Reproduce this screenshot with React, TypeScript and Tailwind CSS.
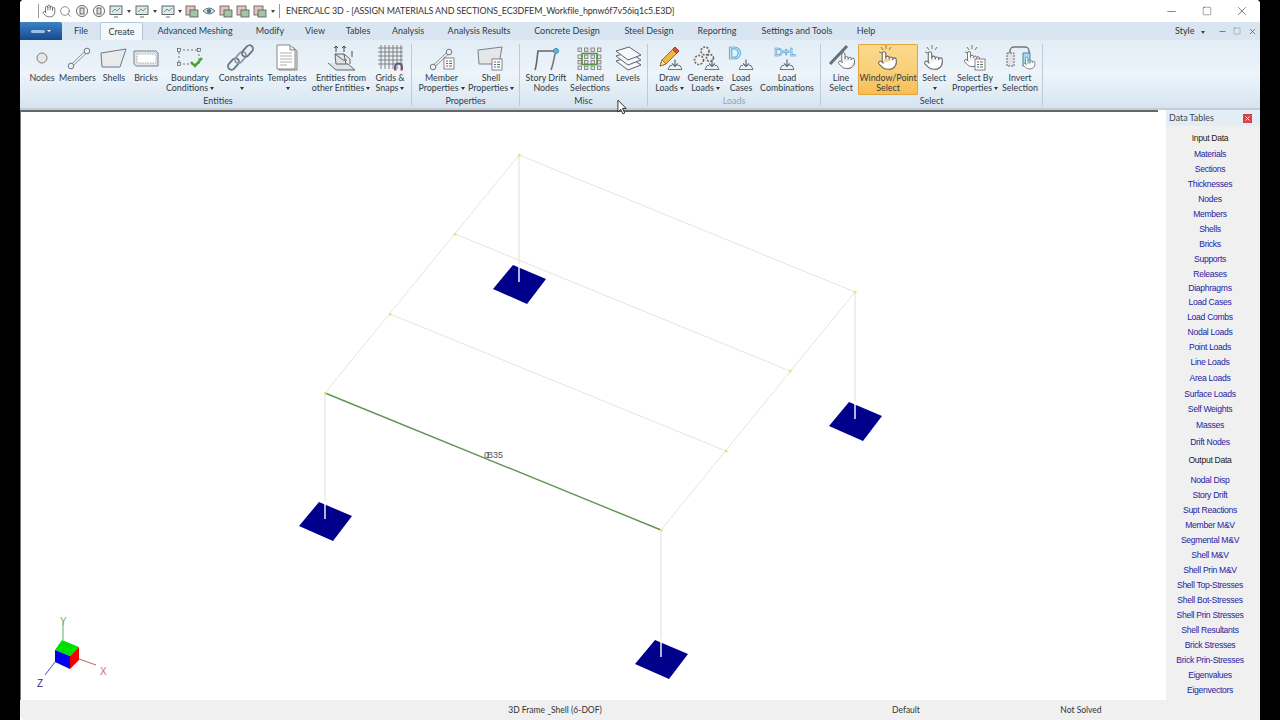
import type { ReactNode } from "react";
import { Hand, Search, Minus, Square, X, Pointer } from "lucide-react";

const tabs = [
  { label: "File", w: "w-[38px]" },
  { label: "Create", w: "w-[43px]", active: true },
  { label: "Advanced Meshing", w: "w-[104px]" },
  { label: "Modify", w: "w-[46px]" },
  { label: "View", w: "w-[44px]" },
  { label: "Tables", w: "w-[42px]" },
  { label: "Analysis", w: "w-[58px]" },
  { label: "Analysis Results", w: "w-[84px]" },
  { label: "Concrete Design", w: "w-[92px]" },
  { label: "Steel Design", w: "w-[72px]" },
  { label: "Reporting", w: "w-[64px]" },
  { label: "Settings and Tools", w: "w-[96px]" },
  { label: "Help", w: "w-[42px]" },
];

const inputRows = [
  { label: "Input Data", h: "h-[16px]", head: true },
  { label: "Materials", h: "h-[15px]" },
  { label: "Sections", h: "h-[15px]" },
  { label: "Thicknesses", h: "h-[15px]" },
  { label: "Nodes", h: "h-[15px]" },
  { label: "Members", h: "h-[15px]" },
  { label: "Shells", h: "h-[15px]" },
  { label: "Bricks", h: "h-[15px]" },
  { label: "Supports", h: "h-[15px]" },
  { label: "Releases", h: "h-[14px]" },
  { label: "Diaphragms", h: "h-[14px]" },
  { label: "Load Cases", h: "h-[15px]" },
  { label: "Load Combs", h: "h-[15px]" },
  { label: "Nodal Loads", h: "h-[15px]" },
  { label: "Point Loads", h: "h-[15px]" },
  { label: "Line Loads", h: "h-[16px]" },
  { label: "Area Loads", h: "h-[16px]" },
  { label: "Surface Loads", h: "h-[15px]" },
  { label: "Self Weights", h: "h-[16px]" },
  { label: "Masses", h: "h-[17px]" },
  { label: "Drift Nodes", h: "h-[18px]" },
  { label: "Output Data", h: "h-[20px]", head: true },
  { label: "Nodal Disp", h: "h-[15px]" },
  { label: "Story Drift", h: "h-[15px]" },
  { label: "Supt Reactions", h: "h-[15px]" },
  { label: "Member M&V", h: "h-[15px]" },
  { label: "Segmental M&V", h: "h-[15px]" },
  { label: "Shell M&V", h: "h-[15px]" },
  { label: "Shell Prin M&V", h: "h-[15px]" },
  { label: "Shell Top-Stresses", h: "h-[15px]" },
  { label: "Shell Bot-Stresses", h: "h-[15px]" },
  { label: "Shell Prin Stresses", h: "h-[15px]" },
  { label: "Shell Resultants", h: "h-[15px]" },
  { label: "Brick Stresses", h: "h-[15px]" },
  { label: "Brick Prin-Stresses", h: "h-[15px]" },
  { label: "Eigenvalues", h: "h-[15px]" },
  { label: "Eigenvectors", h: "h-[15px]" },
];

function Caret() {
  return <span className="ml-[2px] inline-block border-x-[2.5px] border-t-[3px] border-x-transparent border-t-[#333] align-middle" />;
}

function Icon({ children }: { children: ReactNode }) {
  return (
    <svg viewBox="0 0 36 32" className="h-[32px] w-[36px] shrink-0 overflow-visible">
      {children}
    </svg>
  );
}

// arrow dropping into a small tray, centred on x=14 in its own space
function Tray({ dx }: { dx: number }) {
  return (
    <g transform={`translate(${dx} -4.500)`} fill="none" stroke="#5f6b75" strokeWidth="0.9">
      <path d="M7 30h14l-2-4h-2M7 30l2-4h2" />
      <path d="M14 20v7m-3-3l3 3 3-3" strokeWidth="1.2" />
    </g>
  );
}

function HandIcon({ x, y, size }: { x: number; y: number; size: number }) {
  return <Pointer x={x} y={y} width={size} height={size} fill="#fff" stroke="#666" strokeWidth={1.2} />;
}

function Sparks({ x = 0 }: { x?: number }) {
  return (
    <g stroke="#7d7d58" strokeWidth="1" transform={`translate(${x} 0)`}>
      <path d="M14 1v4M9 3l2 3M19 3l-2 3M7 8l3 1" />
    </g>
  );
}

function MiniDoc({ x, y }: { x: number; y: number }) {
  return (
    <g transform={`translate(${x} ${y})`}>
      <rect width="10" height="11" fill="#fdfdfd" stroke="#667" strokeWidth="0.8" />
      <path d="M5 3h3M5 5.500h3M5 8h3" stroke="#4a7a4a" strokeWidth="1" />
      <path d="M2 3h2M2 8h2" stroke="#c04040" strokeWidth="1" />
      <path d="M2 5.500h2" stroke="#3f78b5" strokeWidth="1" />
    </g>
  );
}

function Member({ dx = 0 }: { dx?: number }) {
  return (
    <g transform={`translate(${dx} 0)`} fill="none" stroke="#6d7780">
      <path d="M11 22L27 7" stroke="#7f8992" strokeWidth="3" />
      <path d="M11 22L27 7" stroke="#fff" strokeWidth="1.4" />
      <circle cx="11" cy="22" r="2.800" fill="#eef1f3" />
      <circle cx="27" cy="7" r="2.800" fill="#eef1f3" />
    </g>
  );
}

const icons: Record<string, ReactNode> = {
  nodes: <circle cx="18" cy="14" r="5" fill="#e4e6e8" stroke="#707070" strokeWidth="0.9" />,
  members: <Member dx={0} />,
  shells: <polygon points="5,9 30,5 24,23 6,23" fill="#e8eaec" stroke="#6f7a84" />,
  bricks: (
    <g>
      <polygon points="6,7 28,7 30,9 30,22 8,22 6,20" fill="#e3e5e8" stroke="#78828c" />
      <rect x="9" y="10" width="19" height="9" fill="#fff" stroke="#9aa2aa" strokeWidth="0.8" strokeDasharray="1.5 1" />
    </g>
  ),
  boundary: (
    <g>
      <rect x="7" y="6" width="20" height="14" fill="none" stroke="#555" strokeWidth="0.8" strokeDasharray="2 2" />
      <rect x="5.500" y="4.500" width="3" height="3" fill="#eee" stroke="#444" strokeWidth="0.6" />
      <rect x="25.500" y="4.500" width="3" height="3" fill="#eee" stroke="#444" strokeWidth="0.6" />
      <rect x="5.500" y="18.500" width="3" height="3" fill="#eee" stroke="#444" strokeWidth="0.6" />
      <path d="M19 18l4 4 7-8" fill="none" stroke="#4aa02c" strokeWidth="2.400" />
    </g>
  ),
  constraints: (
    <g fill="none" stroke="#6b7580" strokeWidth="1.800">
      <rect x="4" y="16.500" width="13" height="7" rx="3.500" transform="rotate(-48 10.500 20)" />
      <rect x="11" y="10" width="13" height="7" rx="3.500" transform="rotate(-48 17.500 13.500)" stroke="#8f99a2" />
      <rect x="18" y="3.500" width="13" height="7" rx="3.500" transform="rotate(-48 24.500 7)" />
    </g>
  ),
  templates: (
    <g stroke="#6d6d6d" strokeWidth="0.8">
      <path d="M10 3h14l4 4v19H10z" fill="#e8e8e8" />
      <path d="M8 1h13l5 5v19H8z" fill="#fff" />
      <path d="M21 1v5h5" fill="#eee" />
      <path d="M11 9h12M11 12h12M11 15h12M11 18h12M11 21h7" stroke="#999" />
    </g>
  ),
  entities: (
    <g fill="none" stroke="#555" strokeWidth="0.9">
      <path d="M5 19l8 7h19l-7-6H13l-1-10h9l2 10" fill="#dfe3e6" />
      <path d="M12 10l8 6h4M21 10l6 5v5" />
      <path d="M13 2v6m-2-4l2-2 2 2M21 2v6m-2-4l2-2 2 2" stroke="#333" />
      <path d="M29 7v6" stroke="#333" />
    </g>
  ),
  grids: (
    <g>
      <path d="M9 1v24M13 1v24M17 1v24M21 1v24M25 1v24M29 1v24M6 4h25M6 8h25M6 12h25M6 16h25M6 20h25" stroke="#6a6a6a" strokeWidth="0.8" />
      <path d="M23 26v-3a3.500 3.500 0 017 0v3" fill="none" stroke="#55607a" strokeWidth="2" />
      <path d="M22 25.500h2.500M28.500 25.500H31" stroke="#d04040" strokeWidth="1.800" />
    </g>
  ),
  memberProps: (
    <g>
      <g transform="translate(-2 1)">
        <Member />
      </g>
      <MiniDoc x={20} y={14} />
    </g>
  ),
  shellProps: (
    <g>
      <polygon points="5,6 29,3 26,20 6,20" fill="#e4e6e9" stroke="#78828c" />
      <MiniDoc x={19} y={15} />
    </g>
  ),
  drift: (
    <g fill="none">
      <path d="M7 26c2-6 2-13 3-19h18" stroke="#666" strokeWidth="1.600" />
      <path d="M23 26c2-5 3-11 4-16" stroke="#777" strokeWidth="1.600" />
      <circle cx="28" cy="7" r="2.500" fill="#5fb6e4" stroke="#3b88b8" />
    </g>
  ),
  named: (
    <g fill="#e3e3e3" stroke="#777" strokeWidth="0.8">
      {[6, 12.5, 19, 25.500].map((x) =>
        [4, 11, 16.500, 22].map((y) => <rect key={`${x}-${y}`} x={x} y={y} width="3.400" height="3.400" />),
      )}
      <rect x="10" y="9.500" width="15" height="11" fill="none" stroke="#4f9a3a" strokeWidth="1.600" />
    </g>
  ),
  levels: (
    <g fill="#f6f8fa" stroke="#5d666e" strokeWidth="1">
      <polygon points="6,17 19,13 31,21 18,26" />
      <polygon points="6,12 19,8 31,16 18,21" />
      <polygon points="6,7 19,3 31,11 18,16" />
    </g>
  ),
  draw: (
    <g>
      <Tray dx={9} />
      <path d="M8 22l2-6L23 3l4 4-13 13z" fill="#f3b63c" stroke="#8a6420" strokeWidth="0.9" />
      <path d="M23 3l4 4-2.500 2.500-4-4z" fill="#d9534a" stroke="#8a3020" strokeWidth="0.8" />
      <path d="M8 22l2-6 4 4z" fill="#f5e3bf" stroke="#8a6420" strokeWidth="0.8" />
    </g>
  ),
  generate: (
    <g>
      <g fill="#eef0f1" stroke="#6a6a6a" strokeWidth="1.600" strokeDasharray="2 1.300">
        <circle cx="17" cy="7" r="4" />
        <circle cx="11" cy="16" r="4.500" />
        <circle cx="22" cy="14" r="3.500" />
      </g>
      <Tray dx={10} />
    </g>
  ),
  cases: (
    <g>
      <text x="5" y="15" fontSize="17" fontFamily="Lato, sans-serif" fontWeight="700" fill="#cfe9f8" stroke="#2d8fc7" strokeWidth="0.7">
        D
      </text>
      <Tray dx={9} />
    </g>
  ),
  combinations: (
    <g>
      <text x="5" y="12" fontSize="11.500" fontWeight="700" fontFamily="Lato, sans-serif" fill="#d4ecf9" stroke="#2d8fc7" strokeWidth="0.5">
        D+L
      </text>
      <Tray dx={4} />
    </g>
  ),
  lineSelect: (
    <g>
      <path d="M7 20L24 2" stroke="#66707a" strokeWidth="3" />
      <HandIcon x={14} y={7} size={19} />
    </g>
  ),
  windowSelect: (
    <g>
      <Sparks x={2} />
      <HandIcon x={7} y={6} size={21} />
    </g>
  ),
  select: (
    <g>
      <Sparks x={2} />
      <HandIcon x={7} y={6} size={21} />
    </g>
  ),
  selectBy: (
    <g>
      <Sparks x={1} />
      <HandIcon x={6} y={6} size={18} />
      <MiniDoc x={18} y={15} />
    </g>
  ),
  invert: (
    <g>
      <path d="M8 9V7a4 4 0 014-4h11a4 4 0 014 4v2" fill="none" stroke="#777" strokeWidth="1.500" />
      <rect x="5" y="9" width="7" height="13" fill="#dfe3e6" stroke="#666" strokeDasharray="2 1" />
      <rect x="21" y="9" width="7" height="13" fill="#a8d8ef" stroke="#4b86a5" />
      <HandIcon x={20} y={12} size={14} />
    </g>
  ),
};

function Tool({ icon, lines, w, caret, caretRow, on }: { icon: string; lines: string[]; w: string; caret?: boolean; caretRow?: boolean; on?: boolean }) {
  return (
    <div
      className={`${w} flex h-[51px] shrink-0 flex-col items-center whitespace-nowrap text-center text-[8.900px] leading-[10px] text-[#2f3c48] ${
        on ? "rounded-[2px] bg-gradient-to-b from-[#fbd98f] via-[#fad078] to-[#f9bc52] ring-1 ring-inset ring-[#e2a53c]" : ""
      }`}
    >
      <Icon>{icons[icon]}</Icon>
      {lines.map((line, i) => (
        <div key={line} className={i === 0 ? "mt-[-3px]" : ""}>
          {line}
          {caret && i === lines.length - 1 && <Caret />}
        </div>
      ))}
      {caretRow && (
        <div className="flex h-[10px] items-center">
          <Caret />
        </div>
      )}
    </div>
  );
}

function Group({ label, w, dim, children }: { label: string; w: string; dim?: boolean; children: ReactNode }) {
  return (
    <div className={`${w} flex shrink-0 flex-col border-r border-[#bccbd8]`}>
      <div className="flex h-[48px] items-start">{children}</div>
      <div className={`mt-[4px] text-center text-[8.900px] leading-[10px] ${dim ? "text-[#93a3b1]" : "text-[#2f3c48]"}`}>{label}</div>
    </div>
  );
}

function QuickIcon({ kind }: { kind: "circle" | "monitor" | "scene" | "eye" }) {
  return (
    <svg viewBox="0 0 14 14" className="h-[14px] w-[14px] shrink-0">
      {kind === "circle" && (
        <g fill="none" stroke="#555" strokeWidth="0.9">
          <circle cx="7" cy="7" r="5.500" />
          <rect x="5" y="4" width="4" height="6" fill="#ddd" />
        </g>
      )}
      {kind === "monitor" && (
        <g stroke="#444" strokeWidth="0.8">
          <rect x="1" y="2" width="12" height="8.500" fill="#dbe9ef" />
          <path d="M3 8l3-3 2 2 3-3" fill="none" stroke="#3d8a4a" />
          <path d="M5 13h4" />
        </g>
      )}
      {kind === "scene" && (
        <g stroke="#555" strokeWidth="0.8">
          <rect x="1" y="2" width="9" height="9" fill="#e8c2c0" />
          <rect x="5" y="6" width="8" height="7" fill="#9fc7a3" />
        </g>
      )}
      {kind === "eye" && (
        <g stroke="#4b6b78" strokeWidth="0.9">
          <path d="M1 7q6-6 12 0q-6 6-12 0z" fill="#dbe6ea" />
          <circle cx="7" cy="7" r="1.800" fill="#4b7f95" />
        </g>
      )}
    </svg>
  );
}

function SmallCaret() {
  return <span className="inline-block border-x-[2.5px] border-t-[3px] border-x-transparent border-t-[#444]" />;
}

function TitleBar() {
  return (
    <div className="flex h-[22px] shrink-0 items-center bg-white font-['Lato',sans-serif] text-[#333]">
      <div className="ml-[18px] h-[14px] w-px bg-[#999]" />
      <div className="ml-[2px] flex w-[238px] items-center">
        <Hand size={14} strokeWidth={1.2} className="ml-[1px] mr-[3px] shrink-0 text-[#444]" />
        <Search size={13} strokeWidth={1.2} className="mr-[3px] shrink-0 text-[#555]" />
        <QuickIcon kind="circle" />
        <span className="w-[3px]" />
        <QuickIcon kind="circle" />
        <span className="w-[3px]" />
        <QuickIcon kind="monitor" />
        <span className="mx-[3px] flex w-[6px] justify-center"><SmallCaret /></span>
        <QuickIcon kind="monitor" />
        <span className="mx-[3px] flex w-[6px] justify-center"><SmallCaret /></span>
        <QuickIcon kind="monitor" />
        <span className="mx-[2px] flex w-[6px] justify-center"><SmallCaret /></span>
        <QuickIcon kind="scene" />
        <span className="w-[3px]" />
        <QuickIcon kind="eye" />
        <span className="w-[3px]" />
        <QuickIcon kind="scene" />
        <span className="w-[3px]" />
        <QuickIcon kind="scene" />
        <span className="w-[3px]" />
        <QuickIcon kind="scene" />
        <span className="ml-[3px] flex w-[6px] justify-center"><SmallCaret /></span>
      </div>
      <div className="h-[14px] w-px bg-[#999]" />
      <div className="ml-[6px] flex-1 whitespace-nowrap text-[8.900px] tracking-[-0.1px]">
        ENERCALC 3D - [ASSIGN MATERIALS AND SECTIONS_EC3DFEM_Workfile_hpnw6f7v56iq1c5.E3D]
      </div>
      <Minus size={13} strokeWidth={1} className="mr-[24px] text-[#222]" />
      <Square size={10} strokeWidth={1} className="mr-[23px] text-[#222]" />
      <X size={14} strokeWidth={1} className="mr-[11px] text-[#222]" />
    </div>
  );
}

function TabRow() {
  return (
    <div className="flex h-[18px] shrink-0 items-stretch bg-[#d9e6f2] font-['Lato',sans-serif] text-[9px] text-[#2f3c48]">
      <div className="flex w-[42px] items-center justify-center rounded-tr-[2px] bg-gradient-to-b from-[#3d82c6] to-[#174a8f]">
        <div className="h-[3px] w-[14px] rounded-full bg-[#9cc0de]" />
        <span className="ml-[2px] inline-block border-x-[2px] border-t-[2px] border-x-transparent border-t-white" />
      </div>
      {tabs.map((t) => (
        <div
          key={t.label}
          className={`${t.w} flex shrink-0 items-center justify-center whitespace-nowrap ${
            t.active ? "rounded-t-[2px] border border-b-0 border-[#b7c8d7] bg-[#f3f8fc]" : ""
          }`}
        >
          {t.label}
        </div>
      ))}
      <div className="flex-1" />
      <div className="mr-[13px] flex items-center text-[#333]">
        Style
        <span className="ml-[6px]"><SmallCaret /></span>
      </div>
      <div className="mr-[3.500px] flex w-[39px] items-center justify-between text-[#555]">
        <Minus size={9} strokeWidth={2} />
        <Square size={8} strokeWidth={1} />
        <X size={9} strokeWidth={2} />
      </div>
    </div>
  );
}

function Ribbon() {
  return (
    <div className="flex h-[70px] shrink-0 items-start border-b-2 border-[#c0ced9] bg-gradient-to-b from-[#e2edf6] via-[#edf4fa] to-[#d6e4f0] pl-[5px] pt-[4px] font-['Lato',sans-serif]">
      <Group label="Entities" w="w-[387px]">
        <Tool icon="nodes" lines={["Nodes"]} w="w-[34px]" />
        <Tool icon="members" lines={["Members"]} w="w-[37px]" />
        <Tool icon="shells" lines={["Shells"]} w="w-[36px]" />
        <Tool icon="bricks" lines={["Bricks"]} w="w-[28px]" />
        <Tool icon="boundary" lines={["Boundary", "Conditions"]} caret w="w-[60px]" />
        <Tool icon="constraints" lines={["Constraints"]} caretRow w="w-[42px]" />
        <Tool icon="templates" lines={["Templates"]} caretRow w="w-[50px]" />
        <Tool icon="entities" lines={["Entities from", "other Entities"]} caret w="w-[58px]" />
        <Tool icon="grids" lines={["Grids &", "Snaps"]} caret w="w-[40px]" />
      </Group>
      <Group label="Properties" w="w-[108px]">
        <span className="w-[2px]" />
        <Tool icon="memberProps" lines={["Member", "Properties"]} caret w="w-[55px]" />
        <Tool icon="shellProps" lines={["Shell", "Properties"]} caret w="w-[44px]" />
      </Group>
      <Group label="Misc" w="w-[128px]">
        <Tool icon="drift" lines={["Story Drift", "Nodes"]} w="w-[52px]" />
        <Tool icon="named" lines={["Named", "Selections"]} w="w-[36px]" />
        <span className="w-[2px]" />
        <Tool icon="levels" lines={["Levels"]} w="w-[36px]" />
      </Group>
      <Group label="Loads" w="w-[173px]" dim>
        <Tool icon="draw" lines={["Draw", "Loads"]} caret w="w-[43px]" />
        <Tool icon="generate" lines={["Generate", "Loads"]} caret w="w-[29px]" />
        <Tool icon="cases" lines={["Load", "Cases"]} w="w-[42px]" />
        <Tool icon="combinations" lines={["Load", "Combinations"]} w="w-[50px]" />
      </Group>
      <Group label="Select" w="w-[222px]">
        <span className="w-[3px]" />
        <Tool icon="lineSelect" lines={["Line", "Select"]} w="w-[34px]" />
        <Tool icon="windowSelect" lines={["Window/Point", "Select"]} w="w-[60px]" on />
        <Tool icon="select" lines={["Select"]} caretRow w="w-[32px]" />
        <Tool icon="selectBy" lines={["Select By", "Properties"]} caret w="w-[50px]" />
        <Tool icon="invert" lines={["Invert", "Selection"]} w="w-[40px]" />
      </Group>
    </div>
  );
}

const pad = (cx: number, cy: number) =>
  `${cx - 6},${cy - 19} ${cx + 27},${cy - 5} ${cx + 8},${cy + 20} ${cx - 26},${cy + 5}`;

const columns = [
  { x: 519, top: 155, base: 284 },
  { x: 855, top: 292, base: 421 },
  { x: 661, top: 530, base: 659 },
  { x: 325, top: 393, base: 521 },
];

function Model() {
  return (
    <svg viewBox="21 112 1137 588" className="h-full w-full">
      <g stroke="#e6e6d4" strokeWidth="1" fill="none">
        <path d="M519 155L855 292L661 530M519 155L325 393M455 234L790 371M390 314L726 451" />
      </g>
      <path d="M325 393L661 530" stroke="#5f9553" strokeWidth="1.400" />
      {columns.map((c) => (
        <g key={c.x}>
          <polygon points={pad(c.x, c.base)} fill="#00008b" />
          <line x1={c.x} x2={c.x} y1={c.top} y2={c.base - 20} stroke="#e4e4e4" strokeWidth="1.200" />
          <line x1={c.x} x2={c.x} y1={c.base - 20} y2={c.base - 2} stroke="#fff" strokeWidth="1.400" />
        </g>
      ))}
      {[
        [519, 155],
        [855, 292],
        [661, 530],
        [325, 393],
        [455, 234],
        [790, 371],
        [390, 314],
        [726, 451],
      ].map(([x, y]) => (
        <rect key={x} x={x - 1} y={y - 1} width="2.400" height="2.400" fill="#e8e070" />
      ))}
      <g fontFamily="Liberation Sans, sans-serif" fontSize="9" fill="#555">
        <text x="484" y="458">0</text>
        <text x="487" y="458">B35</text>
      </g>
      <path d="M63 640V621" stroke="#58b060" />
      <path d="M79 659L96 665" stroke="#c06060" />
      <path d="M55 662L45 675" stroke="#5050a8" />
      <polygon points="62,640 79,647 70,656 55,650" fill="#00e000" />
      <polygon points="55,650 70,656 70,669 55,662" fill="#0000f0" />
      <polygon points="70,656 79,647 79,660 70,669" fill="#f00000" />
      <g fontFamily="Liberation Sans, sans-serif" fontSize="10">
        <text x="60" y="625" fill="#70b878">Y</text>
        <text x="100" y="675" fill="#c07070">X</text>
        <text x="37" y="687" fill="#303080">Z</text>
      </g>
    </svg>
  );
}

function DataTables() {
  return (
    <div className="flex w-[94px] shrink-0 flex-col bg-[#f0f0f0] font-['Liberation_Sans',sans-serif]">
      <div className="flex h-[16px] shrink-0 items-center justify-between bg-[#e3edf5] pl-[3px] pr-[8px] font-['Lato',sans-serif] text-[8.900px] text-[#3a4650]">
        Data Tables
        <span className="flex h-[9px] w-[9px] items-center justify-center bg-[#d64545]">
          <X size={7} strokeWidth={3} className="text-white" />
        </span>
      </div>
      <div className="pr-[6px] pt-[5px]">
        {inputRows.map((r) => (
          <div
            key={r.label}
            className={`${r.h} whitespace-nowrap text-center text-[8.600px] leading-[15px] tracking-[-0.3px] ${r.head ? "text-[#222]" : "text-[#2323a0]"}`}
          >
            {r.label}
          </div>
        ))}
      </div>
    </div>
  );
}

export default function App() {
  return (
    <div className="relative flex h-[720px] w-[1280px] overflow-hidden bg-black">
      <div className="ml-[20px] flex w-[1240px] flex-col overflow-hidden rounded-t-[4px] bg-white">
        <TitleBar />
        <TabRow />
        <Ribbon />
        <div className="flex min-h-0 flex-1 bg-white">
          <div className="mr-[8px] min-w-0 flex-1 border-l border-t-2 border-l-[#777] border-t-[#666]">
            <Model />
          </div>
          <DataTables />
        </div>
        <div className="flex h-[20px] shrink-0 items-center rounded-bl-[5px] bg-[#f0f0f0] pt-[1px] text-center font-['Lato',sans-serif] text-[8.500px] text-[#333]">
          <span className="ml-[395px] w-[280px]">3D Frame _Shell (6-DOF)</span>
          <span className="ml-[171px] w-[80px]">Default</span>
          <span className="ml-[95px] w-[80px]">Not Solved</span>
        </div>
      </div>
      <svg viewBox="0 0 12 18" className="absolute left-[617px] top-[99px] h-[17px] w-[11px]">
        <path d="M1 1v13l3-3 2.500 5 2-1-2.500-5h4z" fill="#fff" stroke="#222" strokeWidth="1" />
      </svg>
    </div>
  );
}
